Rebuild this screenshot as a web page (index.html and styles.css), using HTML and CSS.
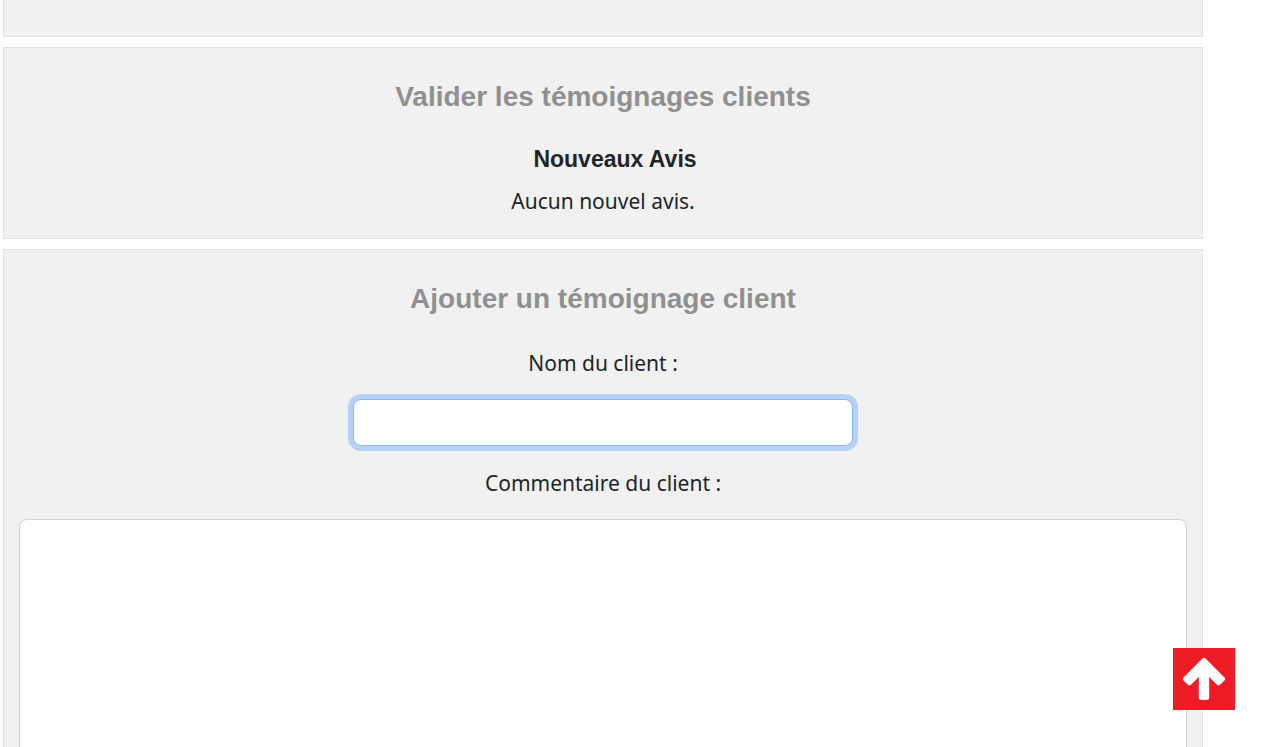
FILE: index.html
```html
<!DOCTYPE html>
<html lang="fr">
<head>
<meta charset="utf-8">
<title>Témoignages clients</title>
<link rel="stylesheet" href="styles.css">
</head>
<body>
<main class="page">
  <section class="panel panel-tail"></section>
  <section class="panel">
    <h2 class="panel-title">Valider les témoignages clients</h2>
    <div class="reviews">
      <h3 class="reviews-title">Nouveaux Avis</h3>
      <p class="reviews-empty">Aucun nouvel avis.</p>
    </div>
  </section>
  <section class="panel">
    <h2 class="panel-title">Ajouter un témoignage client</h2>
    <form class="form">
      <label class="label" for="name">Nom du client :</label>
      <input class="field field-name" id="name" type="text">
      <label class="label" for="comment">Commentaire du client :</label>
      <textarea class="field field-comment" id="comment"></textarea>
    </form>
  </section>
</main>
<a class="to-top" href="#" aria-label="Haut de page">
  <svg class="to-top-icon" viewBox="0 0 62 62" aria-hidden="true"><path fill="currentColor" d="M29.500 10.400Q31 9 32.500 10.400L51.500 29.400Q53 31 51.500 32.600L47.200 36.700Q45.600 38.200 44 36.700L36.200 29V49.500Q36.200 52 33.700 52H28.300Q25.800 52 25.800 49.500V29L18 36.700Q16.400 38.200 14.800 36.700L10.500 32.600Q9 31 10.500 29.400Z"/></svg>
</a>
</body>
</html>
```
FILE: styles.css
```css
* {
  box-sizing: border-box;
}

html,
body {
  height: 100%;
}

body {
  margin: 0;
  overflow: hidden;
  background: #fff;
  color: #212529;
  font: 21px/32px "Noto Sans", "Open Sans", sans-serif;
  text-align: center;
}

.page {
  display: flex;
  flex-direction: column;
  gap: 10px;
  margin: 0 68px 0 3px;
}

.panel {
  padding: 31px 15px 21px;
  border: 1px solid #dee2e6;
  background: #f1f1f1;
}

.panel-tail {
  padding: 18px 0;
  border-top: 0;
}

.panel-title {
  margin: 0 0 30px;
  color: #909090;
  font: bold 28px/36px "Liberation Sans", sans-serif;
}

.reviews-title {
  margin: 0 0 12px;
  padding-left: 24px;
  font: bold 23px/28px "Liberation Sans", sans-serif;
}

.reviews-empty {
  margin: 0;
}

.form {
  display: flex;
  flex-direction: column;
  align-items: center;
}

.label {
  margin-bottom: 20px;
}

.field {
  flex-shrink: 0;
  border: 1px solid #ced4da;
  border-radius: 8px;
  background: #fff;
  font: inherit;
}

.field-name {
  width: 500px;
  max-width: 100%;
  height: 47px;
  margin-bottom: 21px;
  padding: 6px 12px;
  border-color: #86b7fe;
  outline: 0;
  box-shadow: 0 0 0 5px #b8d1f5;
}

.field-comment {
  width: 100%;
  height: 400px;
  padding: 6px 12px;
  resize: none;
}

.to-top {
  position: fixed;
  right: 36px;
  bottom: 37px;
  width: 62px;
  height: 62px;
  background: #ee1c25;
  color: #fff;
}

.to-top-icon {
  display: block;
  width: 100%;
  height: 100%;
}
```
